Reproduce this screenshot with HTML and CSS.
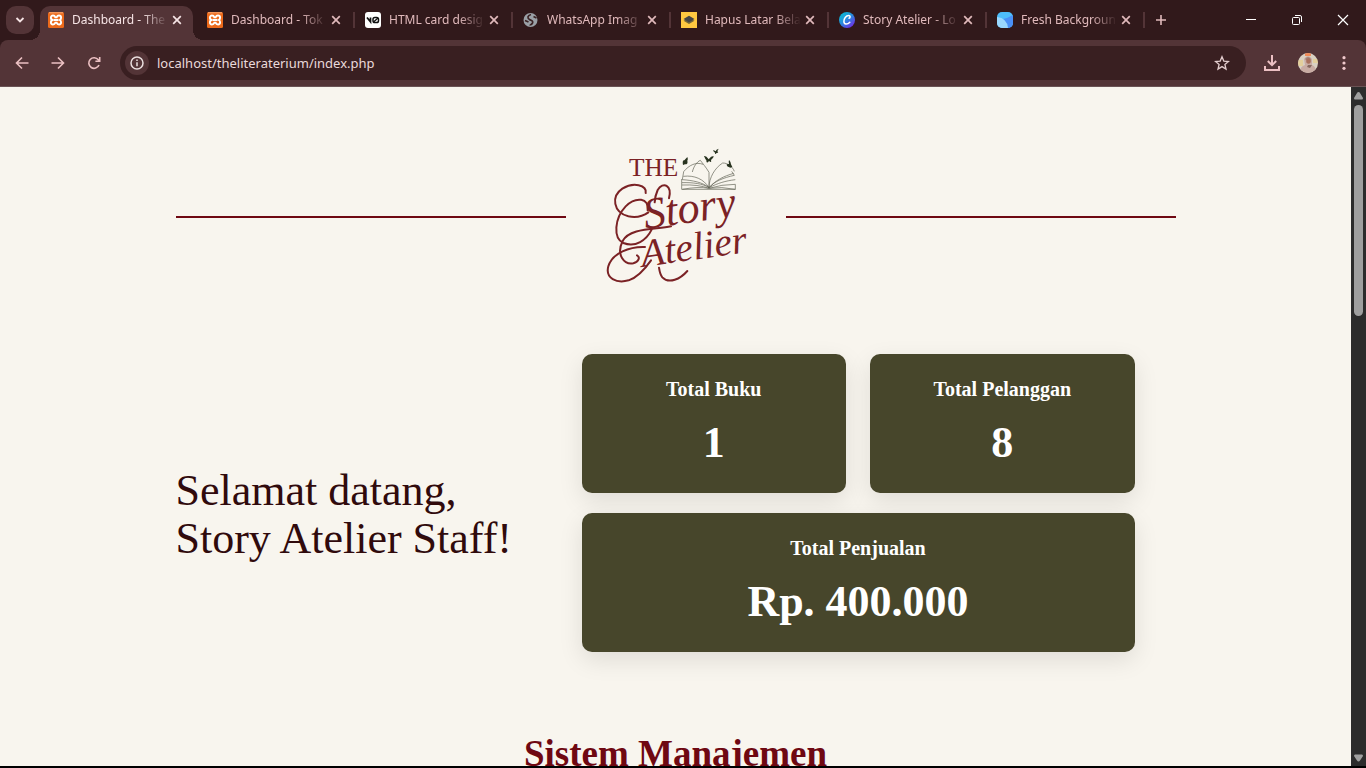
FILE: index.html
```html
<!DOCTYPE html>
<html lang="id">
<head>
<meta charset="utf-8">
<meta name="viewport" content="width=device-width, initial-scale=1">
<title>Dashboard - The Story Atelier</title>
<link rel="stylesheet" href="styles.css">
</head>
<body>
<svg class="defs" aria-hidden="true">
  <symbol id="close" viewBox="0 0 10 10"><path d="M1.200 1.200l7.600 7.600M8.800 1.200L1.200 8.800" fill="none" stroke="currentColor" stroke-width="1.700"/></symbol>
  <symbol id="xampp" viewBox="0 0 16 16">
    <rect width="16" height="16" rx="1.500" fill="#ec6a1b"/>
    <path d="M1 .8h14" stroke="#f9b88a" stroke-width=".8"/>
    <path d="M8 8H5.800M8 8h2.200M5.500 8C3.300 8 2.900 6.800 2.900 5.700c0-1.300.8-2.200 2.100-2.200S7 4.300 7.300 5.200h1.400c.3-.9 1-1.700 2.300-1.700s2.100.9 2.100 2.200c0 1.100-.6 1.900-1.400 2.300.8.4 1.400 1.200 1.400 2.300 0 1.300-.8 2.200-2.100 2.200s-2-.8-2.300-1.700H7.300c-.3.900-1 1.700-2.300 1.700s-2.100-.9-2.100-2.200c0-1.100.4-2.300 2.600-2.300" fill="none" stroke="#fff" stroke-width="1.900"/>
  </symbol>
</svg>

<header class="browser">
  <div class="tabstrip">
    <button class="tab-search" aria-label="Search tabs"><svg width="10" height="10" viewBox="0 0 10 10"><path d="M1.500 3l3.500 3.500L8.500 3" fill="none" stroke="currentColor" stroke-width="1.800"/></svg></button>
    <nav class="tabs" aria-label="Tabs">
      <div class="tab active"><svg class="favicon"><use href="#xampp"/></svg><a class="tab-title" href="#">Dashboard - The</a><button class="tab-close" aria-label="Close tab"><svg><use href="#close"/></svg></button></div>
      <div class="tab"><svg class="favicon"><use href="#xampp"/></svg><a class="tab-title" href="#">Dashboard - Tok</a><button class="tab-close" aria-label="Close tab"><svg><use href="#close"/></svg></button></div>
      <div class="tab"><svg class="favicon" viewBox="0 0 16 16"><rect width="16" height="16" rx="3" fill="#fff"/><path d="M2 5.500l3.500 4.300V5.500" fill="none" stroke="#111" stroke-width="1.700"/><rect x="8" y="5.500" width="5.500" height="5" rx="1.800" fill="none" stroke="#111" stroke-width="1.500"/><path d="M8.500 10l4.500-4" stroke="#111" stroke-width="1.300"/></svg><a class="tab-title" href="#">HTML card desig</a><button class="tab-close" aria-label="Close tab"><svg><use href="#close"/></svg></button></div>
      <div class="tab"><svg class="favicon" viewBox="0 0 16 16"><circle cx="7.500" cy="8" r="7" fill="#9aa0a6"/><path d="M8 2.500C4.500 3.500 4 6 6.500 7.500S10.500 9 9.500 11 7 12.500 7 13.500M2 8.500l3.500 1.500M10.500 4.500l3 1.500" fill="none" stroke="#3a2224" stroke-width="1.700"/></svg><a class="tab-title" href="#">WhatsApp Imag</a><button class="tab-close" aria-label="Close tab"><svg><use href="#close"/></svg></button></div>
      <div class="tab"><svg class="favicon" viewBox="0 0 16 16"><rect width="16" height="16" fill="#ffc840"/><path d="M8 6.200l5.500 2.500L8 12 2.500 8.700z" fill="#756738"/><path d="M8 3.800l5.500 3.200L8 10.200 2.500 7z" fill="#454545"/></svg><a class="tab-title" href="#">Hapus Latar Bela</a><button class="tab-close" aria-label="Close tab"><svg><use href="#close"/></svg></button></div>
      <div class="tab"><svg class="favicon" viewBox="0 0 16 16"><defs><linearGradient id="canva" x1="0" y1="0" x2=".8" y2="1"><stop offset="0" stop-color="#00c8cf"/><stop offset=".5" stop-color="#278ddd"/><stop offset="1" stop-color="#7328e8"/></linearGradient></defs><circle cx="8" cy="8" r="8" fill="url(#canva)"/><path d="M10 6.300c1.500-.6 1.600-2.800-.3-2.800C6.800 3.500 4.900 6.800 4.900 9.300c0 3.500 3.500 3.600 5.900.9" fill="none" stroke="#fff" stroke-width="1.500" stroke-linecap="round"/></svg><a class="tab-title" href="#">Story Atelier - Lo</a><button class="tab-close" aria-label="Close tab"><svg><use href="#close"/></svg></button></div>
      <div class="tab"><svg class="favicon" viewBox="0 0 16 16"><defs><clipPath id="round"><rect width="16" height="16" rx="5"/></clipPath></defs><g clip-path="url(#round)"><path d="M0 0h16v16H0z" fill="#4dbdfb"/><path d="M16 3v13H8L6 7q5-1 10-4" fill="#4a90f7"/><path d="M0 5q10 1 11 11H0z" fill="#9ad8ff"/></g></svg><a class="tab-title" href="#">Fresh Backgroun</a><button class="tab-close" aria-label="Close tab"><svg><use href="#close"/></svg></button></div>
    </nav>
    <button class="new-tab" aria-label="New tab"><svg width="12" height="12" viewBox="0 0 12 12"><path d="M6 1v10M1 6h10" stroke="currentColor" stroke-width="1.600"/></svg></button>
    <div class="window-controls">
      <button aria-label="Minimize"><svg width="12" height="12" viewBox="0 0 12 12"><path d="M1 5.500h10" stroke="#fff"/></svg></button>
      <button aria-label="Restore"><svg width="12" height="12" viewBox="0 0 12 12" fill="none" stroke="#fff"><rect x="1.500" y="3.500" width="7" height="7" rx="1"/><path d="M4 1.500h5q1.500 0 1.500 1.500v5"/></svg></button>
      <button aria-label="Close window"><svg width="12" height="12" viewBox="0 0 12 12"><path d="M1 1l10 10M11 1L1 11" stroke="#fff" stroke-width="1.200"/></svg></button>
    </div>
  </div>

  <div class="toolbar">
    <button class="tool" aria-label="Back"><svg width="14" height="14" viewBox="0 0 14 14"><path d="M13.500 7H2M7 1.500L1.500 7 7 12.500"/></svg></button>
    <button class="tool" aria-label="Forward"><svg width="14" height="14" viewBox="0 0 14 14"><path d="M.5 7H12M7 1.500L12.500 7 7 12.500"/></svg></button>
    <button class="tool" aria-label="Reload"><svg width="14" height="14" viewBox="0 0 14 14"><path d="M12 9a5.300 5.300 0 1 1-.7-5.200L12.500 5M12.700 1v4.300H8.400"/></svg></button>
    <form class="omnibox">
      <button class="site-info" type="button" aria-label="Site information"><svg width="14" height="14" viewBox="0 0 14 14" fill="none" stroke="#eadfdf" stroke-width="1.500"><circle cx="7" cy="7" r="6"/><path d="M7 6.300v4M7 3.500v1.500"/></svg></button>
      <input class="url" type="text" aria-label="Address" value="localhost/theliteraterium/index.php">
      <button class="bookmark" type="button" aria-label="Bookmark"><svg width="16" height="16" viewBox="0 0 16 16"><path d="M8 1.800l1.800 4.300 4.700.4-3.600 3 1.100 4.600L8 11.600l-4 2.500 1.100-4.600-3.600-3 4.700-.4z" fill="none" stroke="#e3cdce" stroke-width="1.300"/></svg></button>
    </form>
    <div class="toolbar-end">
      <button class="tool" aria-label="Downloads"><svg width="16" height="16" viewBox="0 0 16 16"><path d="M8 0v10M3.800 6L8 10.200 12.200 6M1 11v4h14v-4" stroke-width="2"/></svg></button>
      <button class="tool" aria-label="Profile"><svg width="20" height="20" viewBox="0 0 20 20"><defs><clipPath id="face"><circle cx="10" cy="10" r="10"/></clipPath></defs><g clip-path="url(#face)" stroke="none"><path d="M0 0h20v20H0z" fill="#d9d0c2"/><path d="M7 0h6v3H7z" fill="#ef8a58"/><path d="M0 7h5v6H0zM15 6h5v4h-5z" fill="#e3cf9c"/><path d="M2 20q0-7 5-8l-1-6q4-6 8 0v6q4 1 4 8z" fill="#c9aca3"/><path d="M7 6q3-4 6 0l-1 1H8z" fill="#a58178"/><ellipse cx="10.500" cy="8" rx="2.300" ry="2.800" fill="#a8705c"/><path d="M10 12l4 0-2 3-3-1z" fill="#86685f"/></g></svg></button>
      <button class="tool" aria-label="Menu"><svg width="14" height="14" viewBox="0 0 14 14"><g fill="#f0c9cc" stroke="none"><circle cx="7" cy="1.700" r="1.600"/><circle cx="7" cy="7" r="1.600"/><circle cx="7" cy="12.300" r="1.600"/></g></svg></button>
    </div>
  </div>
</header>

<div class="viewport">
  <main class="page">
    <div class="container">
      <div class="brand">
        <span class="rule"></span>
        <svg class="logo" viewBox="-27 -24 540 540" role="img" aria-label="The Story Atelier">
          <g class="logo-text">
            <text x="102" y="122" font-size="76">THE</text>
            <g transform="rotate(-8 170 285)" font-style="italic"><text x="152" y="279" font-size="132">Story</text></g>
            <g transform="rotate(-8 170 390)" font-style="italic"><text x="142" y="392" font-size="118">Atelier</text></g>
          </g>
          <g class="flourish">
            <path d="M152 174C156 150 115 140 82 161C48 184 54 232 100 244C125 249 145 243 160 232"/>
            <path d="M222 190C232 150 204 138 188 165C183 176 180 188 179 202"/>
            <path d="M158 226C164 188 122 184 92 214C58 250 54 310 85 324C122 338 154 316 170 284"/>
            <path d="M228 274C180 284 104 278 83 318C62 360 88 390 115 385C132 380 136 366 126 361"/>
            <path d="M150 336C105 334 52 354 40 394C30 430 65 446 101 436C130 426 150 402 168 376"/>
            <path d="M192 398C194 412 196 420 202 427C222 448 256 432 277 408"/>
          </g>
          <g fill="none" stroke="#5d5f51" stroke-width="2">
            <path d="M342 158C342 128 360 98 383 84C398 84 412 94 418 109M342 158V112C334 98 322 84 316 76C306 80 296 94 292 111"/>
            <path d="M324 88C304 80 282 90 266 110L262 134C292 136 324 142 342 158C358 139 386 128 418 121L410 109"/>
            <path d="M265 124C298 120 326 132 342 158C364 134 386 124 416 115M261 143C294 142 324 146 342 158C370 144 390 138 421 134"/>
            <path d="M261 150Q310 148 342 160Q380 148 421 148V163H260V132M262 163Q310 154 342 160Q380 154 421 163"/>
          </g>
          <g fill="#28331f">
            <path d="M264 90Q261 75 268 76L277 66Q280 72 277 77Q280 88 270 88Z"/>
            <path d="M341 73Q333 61 327 63Q331 73 334 76Q334 88 342 78Q351 86 348 75Q357 68 356 63Q348 63 341 73Z"/>
            <path d="M362 49Q355 44 354 47L360 53Q359 61 365 54Q373 54 367 49L371 41Q363 43 362 49Z"/>
            <path d="M402 87Q400 76 403 76Q408 82 408 88L412 96L406 98Q395 96 395 88Z"/>
          </g>
        </svg>
        <span class="rule"></span>
      </div>

      <section class="hero">
        <h1 class="welcome">Selamat datang,<br>Story Atelier Staff!</h1>
        <div class="stats">
          <article class="card"><h2 class="card-label">Total Buku</h2><p class="card-value">1</p></article>
          <article class="card"><h2 class="card-label">Total Pelanggan</h2><p class="card-value">8</p></article>
          <article class="card wide"><h2 class="card-label">Total Penjualan</h2><p class="card-value">Rp. 400.000</p></article>
        </div>
      </section>

      <h2 class="section-title">Sistem Manajemen</h2>
    </div>
  </main>
  <div class="scrollbar" aria-hidden="true">
    <svg width="9" height="8" viewBox="0 0 9 8"><path d="M4.500 0Q5.500 0 6 1L9 6Q9 7.500 8 7.500H1Q0 7.500 0 6L3 1Q3.500 0 4.500 0Z"/></svg>
    <div class="thumb"></div>
    <svg width="9" height="8" viewBox="0 0 9 8"><path d="M4.500 7.500Q5.500 7.500 6 6.500L9 2Q9 .5 8 .5H1Q0 .5 0 2L3 6.500Q3.500 7.500 4.500 7.500Z"/></svg>
  </div>
</div>
</body>
</html>
```
FILE: styles.css
```css
* { box-sizing: border-box; }

body {
  margin: 0;
  height: 100vh;
  display: flex;
  flex-direction: column;
  overflow: hidden;
  border-bottom: 2px solid #000;
  background: #f8f5ee;
  font-family: "Liberation Serif", serif;
}

button {
  display: flex;
  align-items: center;
  justify-content: center;
  padding: 0;
  border: 0;
  background: none;
  color: inherit;
}

svg { display: block; flex: none; }

.defs { display: none; }

/* Browser frame */
.browser {
  flex: none;
  background: #31191b;
  color: #e0b9bb;
  font-family: "Noto Sans", sans-serif;
}

.tabstrip {
  display: flex;
  height: 40px;
  padding-left: 6px;
}

.tab-search {
  width: 28px;
  height: 28px;
  margin: 6px 6px 0 0;
  border-radius: 10px;
  background: #533437;
  color: #f6e4e5;
}

.tabs {
  display: flex;
  gap: 5px;
  min-width: 0;
}

.tab {
  position: relative;
  display: flex;
  align-items: center;
  flex: 0 1 auto;
  width: 153px;
  min-width: 0;
  height: 34px;
  margin-top: 6px;
  padding: 0 8px 6px;
}

.tab:not(.active)::after {
  content: "";
  position: absolute;
  top: 6px;
  right: -3px;
  width: 2px;
  height: 16px;
  background: #533437;
}

.tab.active {
  margin-right: 1px;
  border-radius: 10px 10px 0 0;
  background: #533437;
  color: #f6e4e5;
}

.tab.active::before,
.tab.active::after {
  content: "";
  position: absolute;
  bottom: 0;
  width: 10px;
  height: 10px;
}

.tab.active::before {
  left: -10px;
  background: radial-gradient(circle at 0 0, transparent 10px, #533437 10px);
}

.tab.active::after {
  right: -10px;
  background: radial-gradient(circle at 100% 0, transparent 10px, #533437 10px);
}

.favicon { width: 16px; height: 16px; }

.tab-title {
  flex: 1;
  min-width: 0;
  margin: 0 0 0 8px;
  overflow: hidden;
  color: inherit;
  font-size: 12px;
  line-height: 16px;
  text-decoration: none;
  white-space: nowrap;
  mask-image: linear-gradient(to right, #000 70px, transparent 96px);
}

.tab-close { width: 16px; height: 16px; }
.tab-close svg { width: 10px; height: 10px; }

.new-tab {
  width: 28px;
  height: 40px;
  margin-left: 5px;
}

.window-controls {
  display: flex;
  margin-left: auto;
}

.window-controls button {
  width: 46px;
  height: 40px;
}

.toolbar {
  display: flex;
  align-items: center;
  height: 47px;
  padding: 0 4px;
  border-bottom: 1px solid #6a5355;
  border-radius: 8px 8px 0 0;
  background: #533437;
}

.tool {
  width: 36px;
  height: 34px;
}

.tool svg {
  fill: none;
  stroke: #ecc0c3;
  stroke-width: 1.6px;
}

.omnibox {
  display: flex;
  align-items: center;
  flex: 1;
  height: 34px;
  margin: 0 8px;
  padding: 0 12px 0 5px;
  border-radius: 17px;
  background: #391f21;
}

.site-info {
  width: 24px;
  height: 24px;
  border-radius: 12px;
  background: #533437;
}

.url {
  flex: 1;
  min-width: 0;
  padding: 0 8px;
  border: 0;
  outline: 0;
  background: none;
  color: #e9d9da;
  font-family: "Noto Sans", sans-serif;
  font-size: 13px;
  line-height: 20px;
}

.bookmark { width: 24px; height: 24px; }

.toolbar-end { display: flex; }

/* Page */
.viewport {
  display: flex;
  flex: 1;
  min-height: 0;
}

.page {
  flex: 1;
  overflow: hidden;
  background: #f8f5ee;
}

.container {
  max-width: 1000px;
  margin: 0 auto;
  padding-top: 40px;
}

.brand {
  display: flex;
  align-items: center;
  gap: 20px;
}

.rule {
  flex: 1;
  height: 2px;
  background: #6f0812;
}

.logo { width: 180px; height: auto; }

.logo-text { fill: #7b2225; }

.flourish {
  fill: none;
  stroke: #7b2225;
  stroke-width: 6;
  stroke-linecap: round;
}

.hero {
  display: grid;
  grid-template-columns: 366px 1fr;
  column-gap: 40px;
  align-items: center;
  margin-top: 47px;
  padding-right: 41px;
}

.welcome {
  margin: 24px 0 0;
  color: #300a0c;
  font-size: 44px;
  font-weight: 400;
  line-height: 48px;
  white-space: nowrap;
}

.stats {
  display: grid;
  grid-template-columns: 1fr 1fr;
  gap: 20px 24px;
}

.card {
  padding: 23px 24px;
  border-radius: 10px;
  background: #47462b;
  box-shadow: 0 8px 24px rgba(0, 0, 0, 0.1);
  color: #fff;
  text-align: center;
}

.wide { grid-column: 1 / -1; }

.card-label {
  margin: 0 0 15px;
  font-size: 20px;
  font-weight: 700;
  line-height: 24px;
}

.card-value {
  margin: 0;
  font-size: 44px;
  font-weight: 700;
  line-height: 54px;
}

.section-title {
  margin: 80px 0 0;
  color: #6f0812;
  font-size: 37px;
  line-height: 44px;
  text-align: center;
}

.scrollbar {
  display: flex;
  flex-direction: column;
  align-items: center;
  width: 15px;
  padding: 5px 0 4px;
  background: #2c2c2c;
}

.scrollbar svg { fill: #9f9f9f; }

.thumb {
  width: 9px;
  height: 211px;
  margin: 5px 0 auto;
  border-radius: 5px;
  background: #9f9f9f;
}
```
